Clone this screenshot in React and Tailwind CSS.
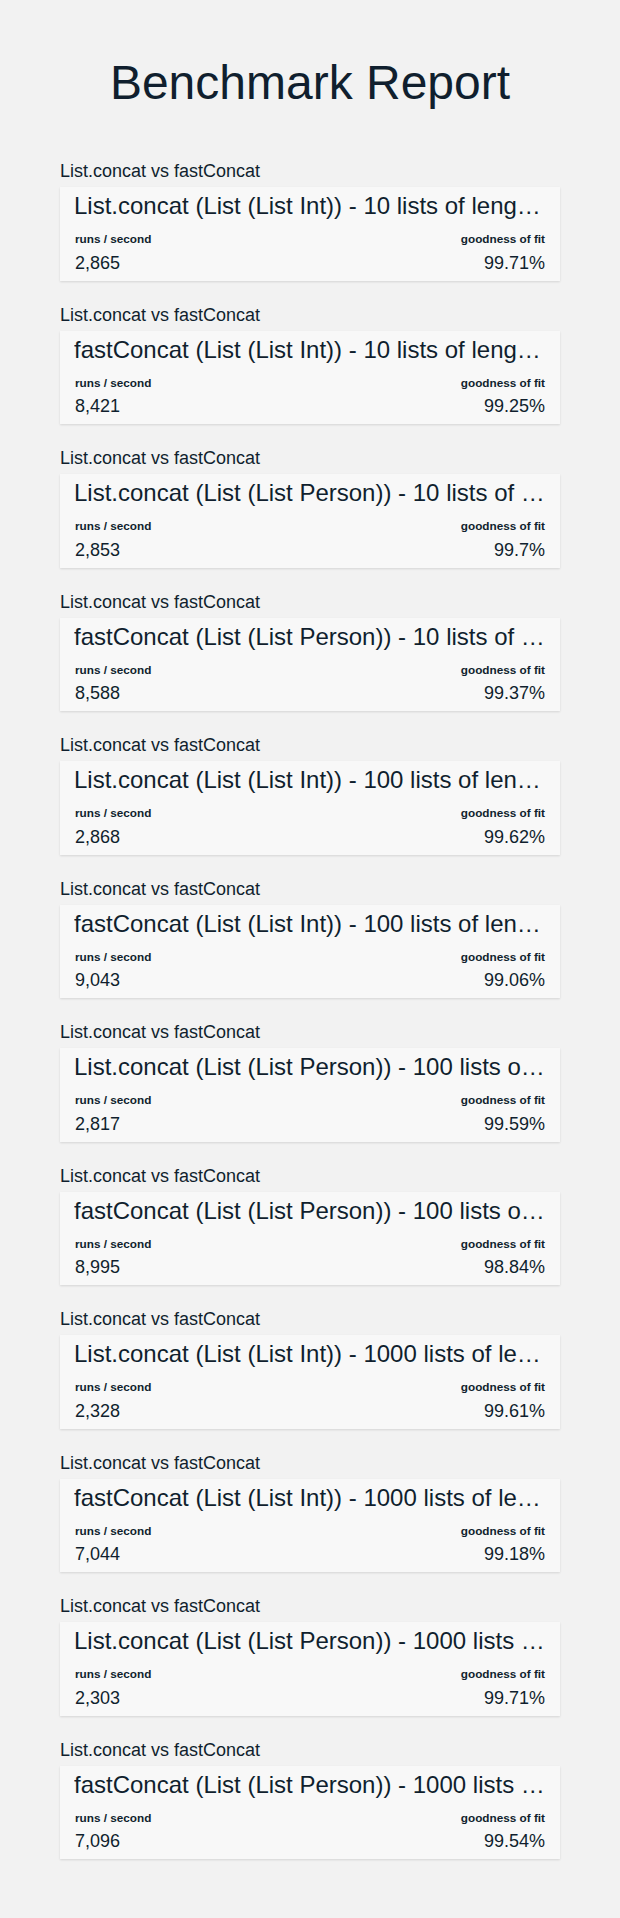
import React from "react";

const rows = [
  ["List.concat (List (List Int)) - 10 lists of length 10", "2,865", "99.71%"],
  ["fastConcat (List (List Int)) - 10 lists of length 10", "8,421", "99.25%"],
  ["List.concat (List (List Person)) - 10 lists of length 10", "2,853", "99.7%"],
  ["fastConcat (List (List Person)) - 10 lists of length 10", "8,588", "99.37%"],
  ["List.concat (List (List Int)) - 100 lists of length 10", "2,868", "99.62%"],
  ["fastConcat (List (List Int)) - 100 lists of length 10", "9,043", "99.06%"],
  ["List.concat (List (List Person)) - 100 lists of length 10", "2,817", "99.59%"],
  ["fastConcat (List (List Person)) - 100 lists of length 10", "8,995", "98.84%"],
  ["List.concat (List (List Int)) - 1000 lists of length 10", "2,328", "99.61%"],
  ["fastConcat (List (List Int)) - 1000 lists of length 10", "7,044", "99.18%"],
  ["List.concat (List (List Person)) - 1000 lists of length 10", "2,303", "99.71%"],
  ["fastConcat (List (List Person)) - 1000 lists of length 10", "7,096", "99.54%"],
];

export default function App() {
  return (
    <div
      className="min-h-screen bg-[#f2f2f2] text-[#101f2e] pt-[55px] pb-[40px]"
      style={{ fontFamily: '"Liberation Sans", Arial, sans-serif' }}
    >
      <h1 className="text-center text-[48px] leading-[56px] font-normal">Benchmark Report</h1>
      <div className="mt-[50px] mx-auto w-[500px]">
        {rows.map(([title, runs, fit], i) => (
          <section key={i} className="mb-[24px]">
            <div className="text-[18px] leading-[21px]">List.concat vs fastConcat</div>
            <div className="mt-[5px] h-[93.5px] bg-[#f8f8f8] px-[15px] pt-[5px] shadow-[0_1px_2px_rgba(0,0,0,0.12)]">
              <div className="-mx-[1px] text-[24px] leading-[28px] whitespace-nowrap overflow-hidden text-ellipsis">
                {title}
              </div>
              <div className="mt-[12px] flex justify-between">
                <div>
                  <div className="text-[11.75px] leading-[14px] font-bold">runs / second</div>
                  <div className="mt-[6.5px] text-[18px] leading-[20px]">{runs}</div>
                </div>
                <div className="text-right">
                  <div className="text-[11.75px] leading-[14px] font-bold">goodness of fit</div>
                  <div className="mt-[6.5px] text-[18px] leading-[20px]">{fit}</div>
                </div>
              </div>
            </div>
          </section>
        ))}
      </div>
    </div>
  );
}
